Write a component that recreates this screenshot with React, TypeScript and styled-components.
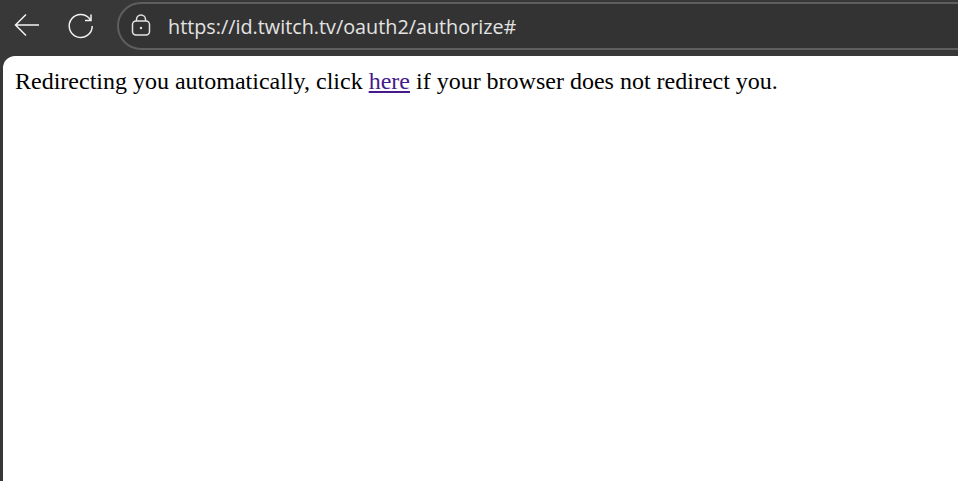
import { createGlobalStyle } from "styled-components";
import styled from "styled-components";

const GlobalStyle = createGlobalStyle`
  html, body {
    margin: 0;
    height: 100%;
    overflow: hidden;
    background: #3b3b3b;
  }
  #root {
    height: 100%;
  }
`;

const Window = styled.div`
  display: flex;
  flex-direction: column;
  height: 481px;
  background: #383838;
`;

const Toolbar = styled.div`
  display: flex;
  align-items: flex-start;
  height: 56px;
  padding: 2px 0 0 13px;
  box-sizing: border-box;
  flex-shrink: 0;
`;

const NavIcon = styled.svg<{ $gap: number }>`
  width: 28px;
  height: 28px;
  margin: 10px ${(p) => p.$gap}px 0 0;
  flex-shrink: 0;
  fill: none;
  stroke: #f2f2f2;
  stroke-width: 1.5;
`;

const AddressBar = styled.div`
  display: flex;
  align-items: center;
  flex: 1;
  height: 48px;
  margin-right: -40px;
  padding-left: 12px;
  box-sizing: border-box;
  background: #333333;
  border: 2px solid #5e5e5e;
  border-radius: 24px;
`;

const LockIcon = styled.svg`
  width: 20px;
  height: 22px;
  margin: -2px 17px 0 0;
  fill: none;
  stroke: #e4e4e4;
  stroke-width: 1.5;
`;

const Url = styled.span`
  font-family: "Open Sans", "Noto Sans", sans-serif;
  font-size: 19.8px;
  color: #e3e3e3;
  white-space: nowrap;
`;

const Content = styled.main`
  flex: 1;
  margin-left: 3px;
  padding: 12px 12px;
  background: #ffffff;
  border-top-left-radius: 12px;
  font-family: "Liberation Serif", "Times New Roman", serif;
  font-size: 24px;
  line-height: 27px;
  color: #000000;
`;

const RedirectLink = styled.a`
  color: #461a8c;
  text-decoration: underline;
`;

export default function App() {
  return (
    <Window>
      <GlobalStyle />
      <Toolbar>
        <NavIcon $gap={26} viewBox="0 0 28 28">
          <path d="M26 13H2.500M13 2.500 2.500 13 13 23.500" />
        </NavIcon>
        <NavIcon $gap={22} viewBox="0 0 28 28">
          <path d="M23.500 8A11.500 11.500 0 1 0 25.200 14" />
          <path d="M24 2.500V8.500H18" />
        </NavIcon>
        <AddressBar>
          <LockIcon viewBox="0 0 20 22">
            <rect x="1.500" y="7" width="17" height="14" rx="3.500" />
            <path d="M5.500 7V5.500a4.500 4.500 0 0 1 9 0V7" />
            <circle cx="10" cy="14" r="1.200" fill="#e4e4e4" stroke="none" />
          </LockIcon>
          <Url>https://id.twitch.tv/oauth2/authorize#</Url>
        </AddressBar>
      </Toolbar>
      <Content>
        Redirecting you automatically, click <RedirectLink href="#">here</RedirectLink> if your
        browser does not redirect you.
      </Content>
    </Window>
  );
}
